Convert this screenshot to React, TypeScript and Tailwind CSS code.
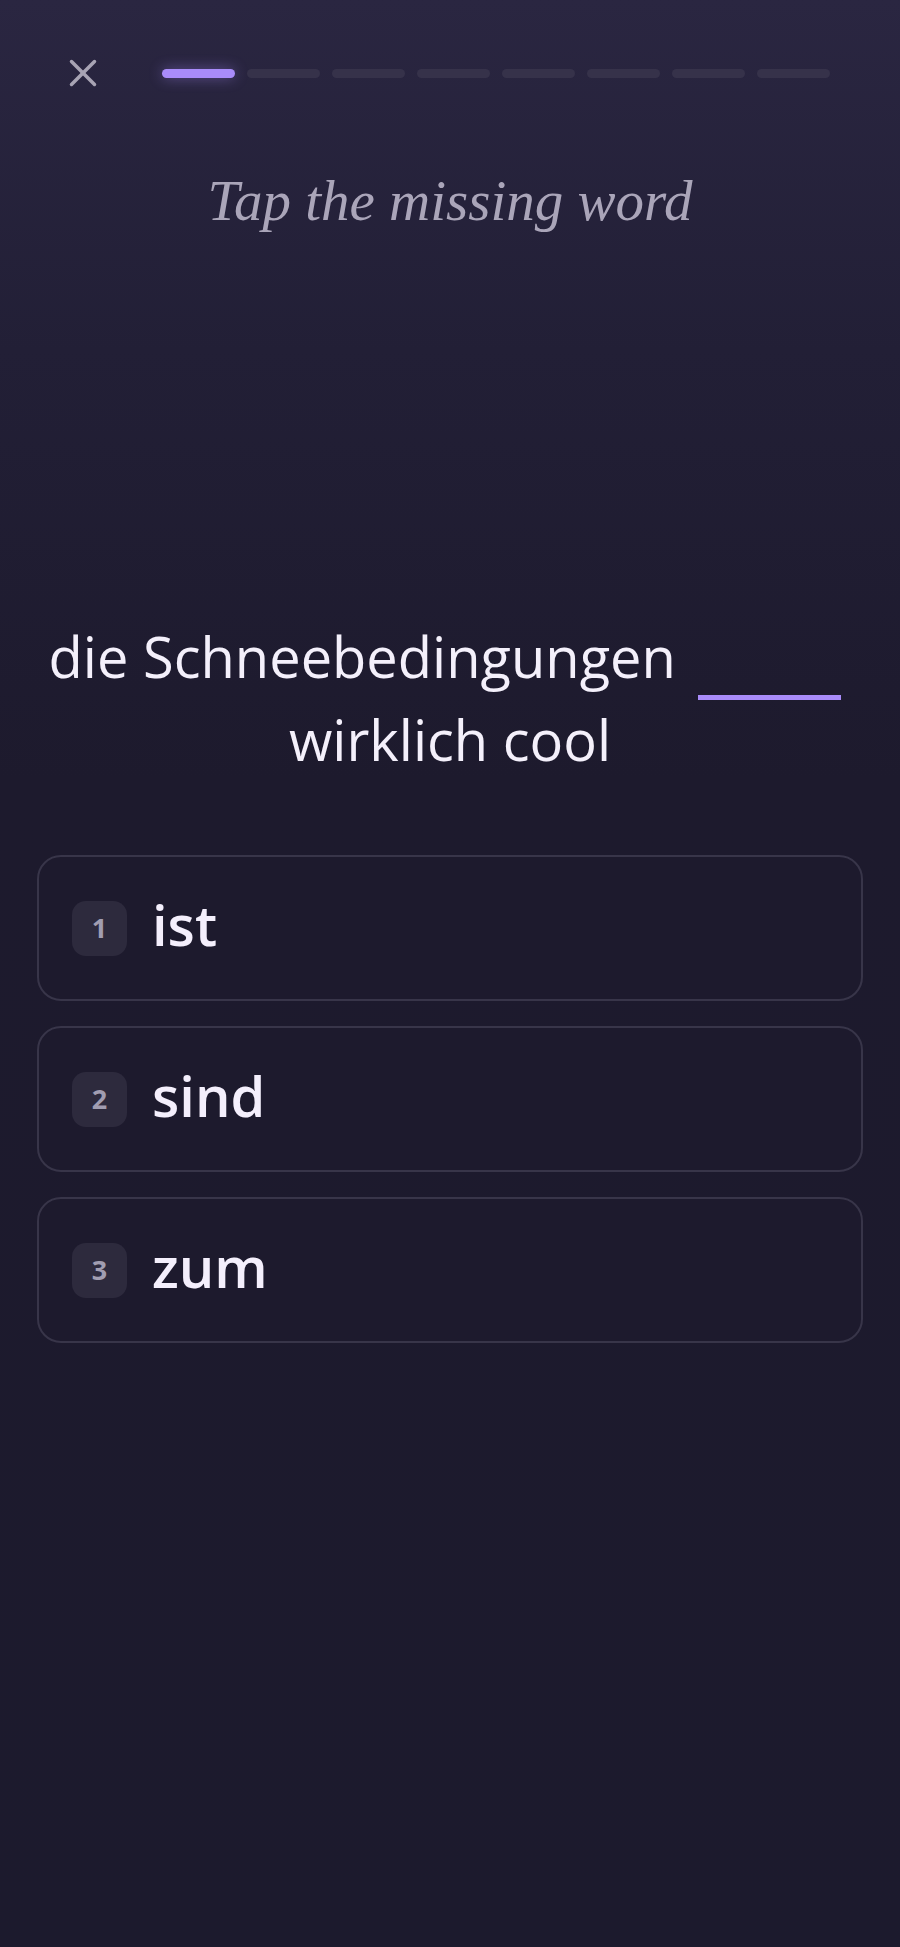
const OPTIONS = [
  { n: 1, word: "ist" },
  { n: 2, word: "sind" },
  { n: 3, word: "zum" },
];

const STEPS = 8;

export default function App() {
  return (
    <main className="min-h-[1947px] w-full bg-[linear-gradient(180deg,#2a2641_0%,#221f36_18%,#1d1a2d_40%,#1c1a2d_100%)] text-white font-['Open_Sans',sans-serif]">
      {/* top bar */}
      <div className="flex items-center pl-[64px] pr-[70px] pt-[54px]">
        <button className="w-[38px] h-[38px] flex items-center justify-center text-[#a8a4b4]">
          <svg width="28" height="28" viewBox="0 0 28 28" fill="none" stroke="currentColor" strokeWidth="3.5" strokeLinecap="round">
            <path d="M2.5 2.5 25.5 25.5" />
            <path d="M25.5 2.5 2.5 25.5" />
          </svg>
        </button>
        <div className="flex-1 flex gap-[12px] ml-[60px]">
          {Array.from({ length: STEPS }).map((_, i) => (
            <div
              key={i}
              className={
                i === 0
                  ? "flex-1 h-[9px] rounded-full bg-[#a98cfa] shadow-[0_0_14px_rgba(167,139,250,0.45)]"
                  : "flex-1 h-[9px] rounded-full bg-[#36324a]"
              }
            />
          ))}
        </div>
      </div>

      <h1 className="mt-[75px] text-center text-[57px] leading-[67px] italic text-[#aaa5b9] font-['Liberation_Serif',serif]">
        Tap the missing word
      </h1>

      {/* sentence */}
      <p className="mt-[383px] px-[24px] text-center text-[56px] leading-[78px] text-[#f4f0fb]">
        die Schneebedingungen{" "}
        <span className="inline-block w-[143px] h-[5px] ml-[8px] mr-[10px] bg-[#a98cfa] align-[-22px]" />{" "}
        wirklich cool
      </p>

      {/* options */}
      <div className="mt-[77px] px-[37px] flex flex-col gap-[25px]">
        {OPTIONS.map((o) => (
          <div
            key={o.n}
            className="h-[146px] rounded-[24px] border-2 border-[#383549] bg-[#1d1a2d] flex items-center pl-[33px] gap-[25px]"
          >
            <div className="w-[55px] h-[55px] rounded-[14px] bg-[#2d2a3d] flex items-center justify-center text-[27px] font-bold text-[#a19db1]">
              {o.n}
            </div>
            <span className="text-[56px] font-semibold text-[#f4effc] leading-none pb-[8px]">{o.word}</span>
          </div>
        ))}
      </div>
    </main>
  );
}
